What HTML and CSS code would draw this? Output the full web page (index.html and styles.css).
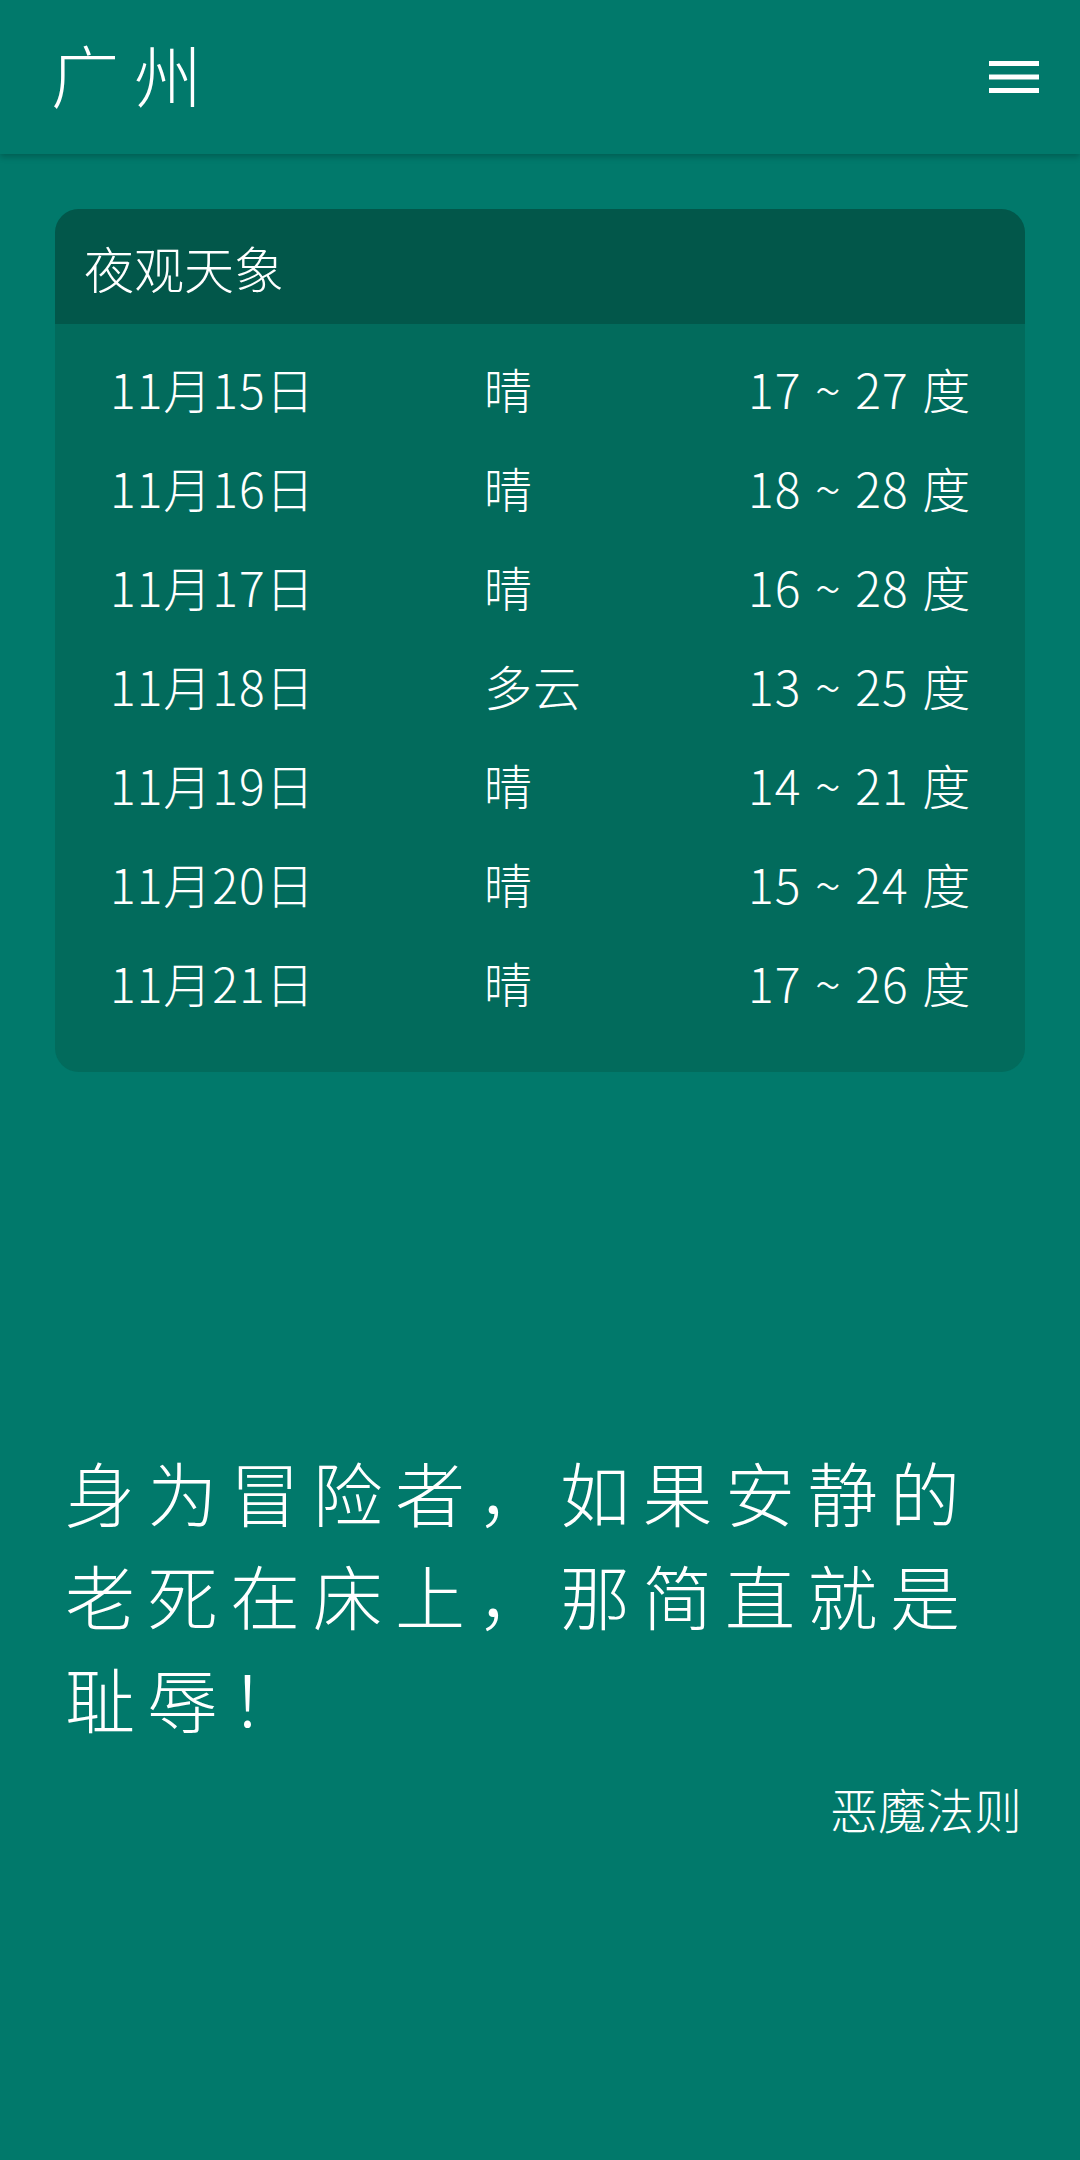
FILE: index.html
```html
<!DOCTYPE html>
<html lang="zh-CN">
<head>
<meta charset="utf-8">
<title>广州</title>
<link rel="stylesheet" href="styles.css">
</head>
<body>
<header class="topbar">
  <h1 class="city">广州</h1>
  <button class="menu" aria-label="菜单">
    <svg width="50" height="32" viewBox="0 0 50 32"><rect x="0" y="0" width="50" height="5" fill="#fff"/><rect x="0" y="13.5" width="50" height="5" fill="#fff"/><rect x="0" y="27" width="50" height="5" fill="#fff"/></svg>
  </button>
</header>
<main class="content">
  <section class="card">
    <div class="card-head">夜观天象</div>
    <div class="card-body">
      <div class="row"><span>11月15日</span><span>晴</span><span>17 ~ 27 度</span></div>
      <div class="row"><span>11月16日</span><span>晴</span><span>18 ~ 28 度</span></div>
      <div class="row"><span>11月17日</span><span>晴</span><span>16 ~ 28 度</span></div>
      <div class="row"><span>11月18日</span><span>多云</span><span>13 ~ 25 度</span></div>
      <div class="row"><span>11月19日</span><span>晴</span><span>14 ~ 21 度</span></div>
      <div class="row"><span>11月20日</span><span>晴</span><span>15 ~ 24 度</span></div>
      <div class="row"><span>11月21日</span><span>晴</span><span>17 ~ 26 度</span></div>
    </div>
  </section>
  <section class="quote">
    <p class="quote-text">身为冒险者，如果安静的老死在床上，那简直就是耻辱！</p>
    <p class="quote-author">恶魔法则</p>
  </section>
</main>
</body>
</html>
```
FILE: styles.css
```css
html, body {
  margin: 0;
  padding: 0;
}
body {
  width: 1080px;
  min-height: 2160px;
  background: #01796b;
  color: #ffffff;
  font-family: "Liberation Serif", "Noto Sans CJK SC", serif;
  font-weight: 300;
}
.topbar {
  height: 154px;
  background: #01796b;
  display: flex;
  align-items: center;
  justify-content: space-between;
  padding: 0 41px 0 51px;
  box-shadow: 0 3px 6px rgba(0, 0, 0, 0.22);
  position: relative;
}
.city {
  margin: 0;
  font-size: 68px;
  font-weight: 300;
  letter-spacing: 15px;
  line-height: 1;
  padding-top: 6px;
}
.menu {
  background: none;
  border: 0;
  padding: 0;
  display: flex;
}
.content {
  padding: 55px 55px 0;
}
.card {
  border-radius: 24px;
  overflow: hidden;
  background: #026b5c;
}
.card-head {
  height: 115px;
  background: #02574a;
  display: flex;
  align-items: center;
  padding-left: 29px;
  font-size: 50px;
}
.card-body {
  padding: 15px 40px 40px 55px;
}
.row {
  display: grid;
  grid-template-columns: 374px 264px 1fr;
  height: 99px;
  line-height: 99px;
  font-size: 48px;
  letter-spacing: 1px;
  word-spacing: 2px;
  white-space: nowrap;
  font-family: "Noto Sans CJK SC", sans-serif;
}
.quote {
  margin-top: 375px;
  padding: 0 3px 0 10px;
}
.quote-text {
  margin: 0;
  font-size: 70px;
  line-height: 103px;
  letter-spacing: 12.5px;
}
.quote-author {
  margin: 27px 0 0;
  text-align: right;
  font-size: 48px;
  line-height: 60px;
}
```
